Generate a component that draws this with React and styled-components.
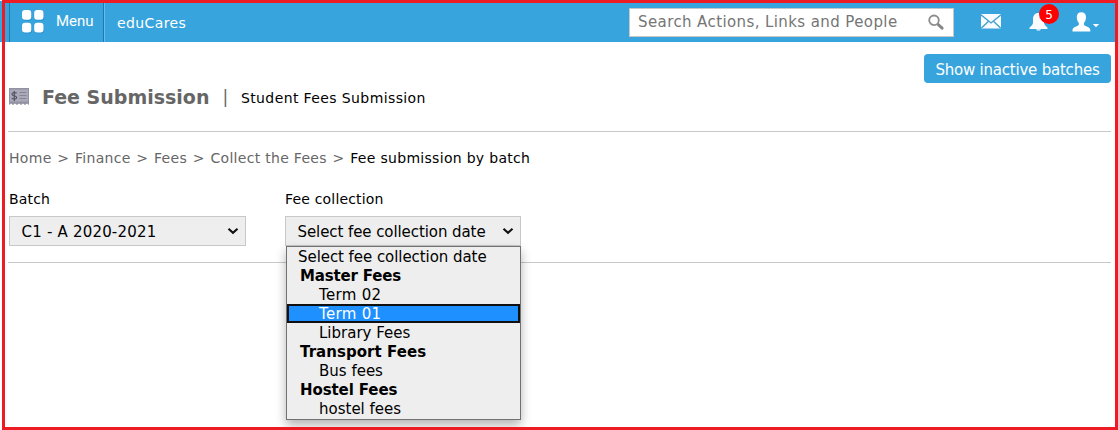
import React from 'react';
import styled, { createGlobalStyle } from 'styled-components';

const GlobalStyle = createGlobalStyle`
  *, *::before, *::after { box-sizing: border-box; }
  body {
    margin: 0;
    background: #fff;
    color: #000;
    font-family: Verdana, "DejaVu Sans", sans-serif;
    font-size: 14px;
  }
`;

const Page = styled.div`
  position: relative;
  width: 1118px;
  height: 430px;
  overflow: hidden;
  padding-top: 1px;
`;

const Frame = styled.div`
  position: absolute;
  inset: 0 0 0 2px;
  border: 3px solid #ed1c24;
  pointer-events: none;
  z-index: 5;
`;

const Header = styled.header`
  display: flex;
  align-items: center;
  height: 41px;
  padding: 0 16px 0 9px;
  background: #38a4dd;
  color: #fff;
`;

const MenuButton = styled.div`
  display: flex;
  align-items: center;
  width: 96px;
  height: 41px;
  padding-left: 12px;
  border-left: 1px solid #2078ab;
  border-right: 1px solid #62bdec;
  box-shadow: inset -1px 0 #2078ab;
  font-family: Roboto, sans-serif;
  font-size: 15px;
`;

const MenuLabel = styled.span`
  margin: -2px 0 0 11px;
  line-height: 18px;
`;

const Brand = styled.div`
  margin: 3px 0 0 12px;
  line-height: 18px;
  letter-spacing: 0.4px;
`;

const SearchBox = styled.div`
  display: flex;
  align-items: center;
  justify-content: space-between;
  width: 325px;
  height: 29px;
  margin-left: auto;
  margin-top: 1px;
  padding: 0 8px 0 8px;
  border: 1px solid #c6c6c6;
  background: #fff;
  color: #757575;
  font-size: 15px;
  white-space: nowrap;
`;

const HeaderIcons = styled.div`
  display: flex;
  align-items: center;
  width: 148px;
  height: 41px;
  padding-left: 27px;
`;

const Alerts = styled.div`
  position: relative;
  display: flex;
  margin-left: 28px;
`;

const Badge = styled.span`
  position: absolute;
  left: 10px;
  top: -9px;
  width: 20px;
  height: 20px;
  border-radius: 50%;
  background: #f00;
  font-size: 12px;
  line-height: 22px;
  text-align: center;
`;

const Profile = styled.div`
  display: flex;
  margin-left: 24px;
`;

const Main = styled.main`
  padding: 12px 7px 0 8px;
`;

const Actions = styled.div`
  display: flex;
  justify-content: flex-end;
`;

const ActionButton = styled.div`
  width: 187px;
  height: 29px;
  border-radius: 4px;
  background: #38a4dd;
  color: #fff;
  font-size: 15px;
  line-height: 32px;
  letter-spacing: -0.22px;
  text-align: center;
  white-space: nowrap;
`;

const TitleRow = styled.div`
  display: flex;
  align-items: center;
  height: 49px;
  padding: 0 0 21px 1px;
  border-bottom: 1px solid #c8c8c8;
`;

const Title = styled.h1`
  margin: 0 0 0 13px;
  color: #666;
  font-size: 19px;
  line-height: 24px;
`;

const Divider = styled.span`
  width: 6px;
  margin: 0 12.5px 0 13px;
  color: #666;
  font-size: 17px;
  line-height: 20px;
`;

const Subtitle = styled.span`
  padding-top: 3px;
  line-height: 20px;
  letter-spacing: 0.39px;
`;

const Crumbs = styled.nav`
  display: flex;
  gap: 5.7px;
  padding: 16px 0 0 1px;
  color: #666;
  line-height: 20px;
  letter-spacing: 0.3px;
`;

const Crumb = styled.span`
  color: ${p => (p.$current ? '#000' : '#666')};
`;

const Fields = styled.div`
  display: flex;
  gap: 39px;
  height: 95px;
  padding: 21px 0 0 1px;
  border-bottom: 1px solid #c8c8c8;
`;

const Field = styled.div`
  position: relative;
  width: ${p => p.$width}px;
`;

const Label = styled.div`
  margin-bottom: 7px;
  line-height: 20px;
  letter-spacing: 0.18px;
`;

const SelectBox = styled.div`
  display: flex;
  align-items: center;
  justify-content: space-between;
  height: 30px;
  padding: 0 6px 0 11.5px;
  border: 1px solid #c8c8c8;
  background: #eee;
  font-size: 15px;
  white-space: nowrap;
`;

const SelectValue = styled.span`
  padding-top: 2px;
  letter-spacing: ${p => p.$track}px;
`;

const Options = styled.div`
  position: absolute;
  left: 1px;
  top: 57px;
  width: 235px;
  height: 174px;
  border: 1px solid #717171;
  background: #eee;
  box-shadow: 0 5px 10px rgba(0, 0, 0, 0.3);
  font-size: 15px;
  z-index: 2;
`;

const Option = styled.div`
  height: 19px;
  padding-left: ${p => (p.$nested ? 32 : 11)}px;
  line-height: 21px;
  letter-spacing: ${p => p.$track || 0}px;
  white-space: nowrap;
  ${p => p.$selected && `
    background: #1e90ff;
    color: #fff;
    outline: 2px solid #101010;
    outline-offset: -2px;
  `}
`;

const GroupLabel = styled(Option)`
  padding-left: 13px;
  font-weight: bold;
`;

const Placeholder = styled.span`
  letter-spacing: 0.4px;
`;

const Chevron = () => (
  <svg width="12" height="8" viewBox="0 0 12 8">
    <path d="M1.5 1.7 6 5.8l4.5-4.1" fill="none" stroke="#111" strokeWidth="2.1" />
  </svg>
);

const GridIcon = () => (
  <svg width="23" height="24" viewBox="0 0 23 24">
    <g fill="#1d85bd" opacity=".55" transform="translate(.6 1)">
      <rect x="0" y="0" width="9.3" height="9.7" rx="3" /><rect x="12.2" y="0" width="9.3" height="9.7" rx="3" />
      <rect x="0" y="12.7" width="9.3" height="9.7" rx="3" /><rect x="12.2" y="12.7" width="9.3" height="9.7" rx="3" />
    </g>
    <g fill="#fff">
      <rect x="0" y="0" width="9.3" height="9.7" rx="3" /><rect x="12.2" y="0" width="9.3" height="9.7" rx="3" />
      <rect x="0" y="12.7" width="9.3" height="9.7" rx="3" /><rect x="12.2" y="12.7" width="9.3" height="9.7" rx="3" />
    </g>
  </svg>
);

const SearchIcon = () => (
  <svg width="18" height="17" viewBox="0 0 18 17">
    <path d="m10.6 10 4.500 4.200" stroke="#858585" strokeWidth="3" strokeLinecap="round" />
    <circle cx="7" cy="6.300" r="4.800" fill="#fff" stroke="#8c8c8c" strokeWidth="1.800" />
  </svg>
);

const MailIcon = () => (
  <svg width="20" height="15" viewBox="0 0 20 15">
    <rect width="20" height="14.5" fill="#f8fcfe" />
    <path d="m0 .8 10 8.2L20 .8M.3 14.2l7.2-7M19.7 14.2l-7.2-7" fill="none" stroke="#409fcf" strokeWidth="1.3" />
  </svg>
);

const BellIcon = () => (
  <svg width="19" height="18" viewBox="0 0 19 18">
    <path d="M9.5 0C5.8 0 4 2.7 4 6v3.500c0 2-1.200 3.200-3.500 5.200V16h18v-1.300c-2.300-2-3.500-3.200-3.500-5.200V6c0-3.300-1.800-6-5.500-6zM7 16.300h5L11 17.500H8z" fill="#f8fcfe" />
  </svg>
);

const UserIcon = () => (
  <svg width="29" height="20" viewBox="0 0 29 20">
    <path d="M9.300.2C6.400.2 4.800 2 4.800 5c0 2.500.7 4.500 2 5.800v2C6.500 14.500.500 14.800.500 18v1.500h17.800V18c0-3.200-6-3.500-6.300-5.200v-2c1.300-1.300 2-3.300 2-5.800 0-3-1.800-4.800-4.700-4.800z" fill="#fff" />
    <path d="M20.800 12h6.400L24 15.300z" fill="#fff" />
  </svg>
);

const ReceiptIcon = () => (
  <svg width="20" height="18" viewBox="0 0 20 18">
    <path d="M0 0h20v17l-2-1.500-2 1.500-2-1.500-2 1.500-2-1.500-2 1.500-2-1.500-2 1.500-2-1.500L0 17z" fill="#9292a2" />
    <path d="M1 1.500h18v12H1z" fill="#a9a9b8" />
    <path d="M10.500 4.500h7M10.500 7.500h7M10.500 10.500h7" stroke="#858596" strokeWidth="1.200" />
    <path d="M7.700 5.300C6.500 4.200 3 4.200 3 6.200c0 2.200 4.700 1.200 4.700 3.300 0 2-3.700 2-5 .7M5.300 3v10" fill="none" stroke="#555567" strokeWidth="1.200" />
  </svg>
);

export default function App() {
  return (
    <Page>
      <GlobalStyle />
      <Header>
        <MenuButton>
          <GridIcon />
          <MenuLabel>Menu</MenuLabel>
        </MenuButton>
        <Brand>eduCares</Brand>
        <SearchBox>
          <Placeholder>Search Actions, Links and People</Placeholder>
          <SearchIcon />
        </SearchBox>
        <HeaderIcons>
          <MailIcon />
          <Alerts>
            <BellIcon />
            <Badge>5</Badge>
          </Alerts>
          <Profile><UserIcon /></Profile>
        </HeaderIcons>
      </Header>
      <Main>
        <Actions><ActionButton>Show inactive batches</ActionButton></Actions>
        <TitleRow>
          <ReceiptIcon />
          <Title>Fee Submission</Title>
          <Divider>|</Divider>
          <Subtitle>Student Fees Submission</Subtitle>
        </TitleRow>
        <Crumbs>
          <Crumb>Home</Crumb><span>&gt;</span>
          <Crumb>Finance</Crumb><span>&gt;</span>
          <Crumb>Fees</Crumb><span>&gt;</span>
          <Crumb>Collect the Fees</Crumb><span>&gt;</span>
          <Crumb $current>Fee submission by batch</Crumb>
        </Crumbs>
        <Fields>
          <Field $width={237}>
            <Label>Batch</Label>
            <SelectBox><SelectValue $track={0.2}>C1 - A 2020-2021</SelectValue><Chevron /></SelectBox>
          </Field>
          <Field $width={236}>
            <Label>Fee collection</Label>
            <SelectBox><SelectValue $track={-0.08}>Select fee collection date</SelectValue><Chevron /></SelectBox>
            <Options>
              <Option $track={-0.06}>Select fee collection date</Option>
              <GroupLabel $track={-0.18}>Master Fees</GroupLabel>
              <Option $nested $track={0.3}>Term 02</Option>
              <Option $nested $selected $track={0.3}>Term 01</Option>
              <Option $nested>Library Fees</Option>
              <GroupLabel $track={0.05}>Transport Fees</GroupLabel>
              <Option $nested>Bus fees</Option>
              <GroupLabel $track={-0.1}>Hostel Fees</GroupLabel>
              <Option $nested>hostel fees</Option>
            </Options>
          </Field>
        </Fields>
      </Main>
      <Frame />
    </Page>
  );
}
